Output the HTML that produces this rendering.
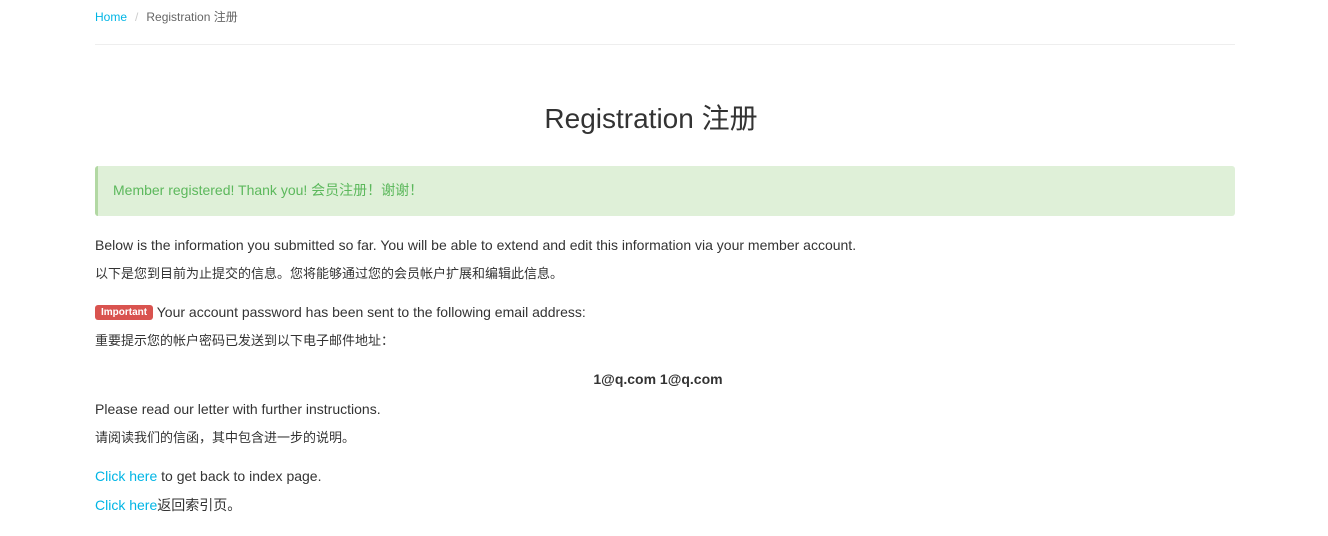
<!DOCTYPE html>
<html><head><meta charset="utf-8"><style>
body{margin:0;background:#fff;font-family:"Liberation Sans","Noto Sans CJK SC",sans-serif;color:#333;font-size:14px;}
.c{position:absolute;left:95px;width:1140px;}
a{color:#00b5e5;text-decoration:none;}
.p{position:absolute;left:95px;white-space:nowrap;line-height:20px;}
</style></head><body>
<div class="p" style="top:7px;font-size:12px;"><a>Home</a><span style="color:#ccc;margin:0 8px">/</span><span style="color:#666">Registration 注册</span></div>
<div class="c" style="top:44px;height:1px;background:#eee"></div>
<div class="c" style="top:100px;left:81px;text-align:center;font-size:28px;line-height:38px;color:#333">Registration 注册</div>
<div class="c" style="top:166px;height:50px;background:#dff0d8;border-left:3px solid #b2d8a3;border-radius:3px;box-sizing:border-box;color:#5cb85c;line-height:48px;padding-left:15px;">Member registered! Thank you! 会员注册！谢谢！</div>
<div class="p" style="top:235px">Below is the information you submitted so far. You will be able to extend and edit this information via your member account.</div>
<div class="p" style="top:264px;font-size:13px">以下是您到目前为止提交的信息。您将能够通过您的会员帐户扩展和编辑此信息。</div>
<div class="p" style="top:302px"><span style="background:#d9534f;color:#fff;font-size:10px;font-weight:bold;padding:2px 6px;border-radius:3px;vertical-align:2px">Important</span> Your account password has been sent to the following email address:</div>
<div class="p" style="top:331px;font-size:13px">重要提示您的帐户密码已发送到以下电子邮件地址：</div>
<div class="c" style="top:369px;left:88px;text-align:center;font-weight:bold;line-height:20px">1@q.com 1@q.com</div>
<div class="p" style="top:399px">Please read our letter with further instructions.</div>
<div class="p" style="top:428px;font-size:13px">请阅读我们的信函，其中包含进一步的说明。</div>
<div class="p" style="top:466px"><a>Click here</a> to get back to index page.</div>
<div class="p" style="top:495px"><a>Click here</a>返回索引页。</div>
</body></html>
